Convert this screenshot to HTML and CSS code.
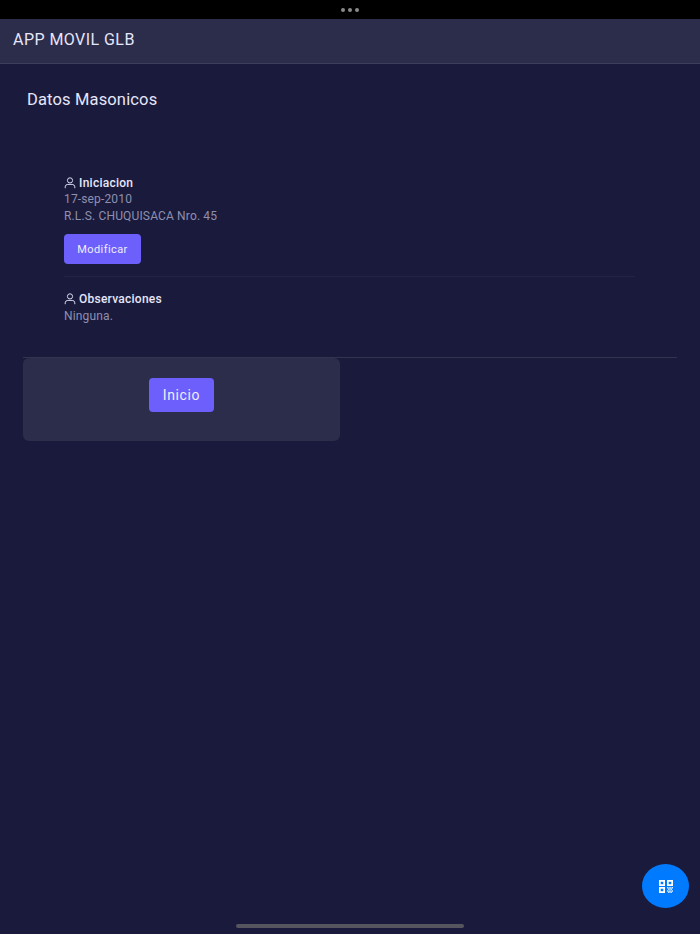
FILE: index.html
```html
<!DOCTYPE html>
<html lang="es">
<head>
<meta charset="utf-8">
<title>APP MOVIL GLB</title>
<link rel="stylesheet" href="styles.css">
</head>
<body>
<div class="status"><span class="dot"></span><span class="dot"></span><span class="dot"></span></div>
<header class="bar">APP MOVIL GLB</header>
<main class="content">
  <h1 class="title">Datos Masonicos</h1>
  <section class="list">
    <div class="item">
      <div class="label"><svg class="user" viewBox="0 0 12 12" width="12" height="12"><circle cx="6" cy="3.400" r="2.600"/><path d="M1.200 11.200v-1.400A2.600 2.600 0 0 1 3.800 7.400h4.400a2.600 2.600 0 0 1 2.600 2.400v1.400"/></svg>Iniciacion</div>
      <div class="value">17-sep-2010</div>
      <div class="value">R.L.S. CHUQUISACA Nro. 45</div>
      <button class="btn small">Modificar</button>
    </div>
    <div class="item last">
      <div class="label"><svg class="user" viewBox="0 0 12 12" width="12" height="12"><circle cx="6" cy="3.400" r="2.600"/><path d="M1.200 11.200v-1.400A2.600 2.600 0 0 1 3.800 7.400h4.400a2.600 2.600 0 0 1 2.600 2.400v1.400"/></svg>Observaciones</div>
      <div class="value">Ninguna.</div>
    </div>
  </section>
  <section class="panel"><button class="btn large">Inicio</button></section>
</main>
<button class="fab" aria-label="QR">
  <svg viewBox="0 0 14 13" width="14" height="13"><path fill-rule="evenodd" d="M0 0h6v6H0zM1.700 1.700v2.600h2.600V1.700zM8 0h6v6H8zM9.700 1.700v2.600h2.600V1.700zM0 7h6v6H0zM1.700 8.700v2.600h2.600V8.700z"/><path class="qr-dots" d="M8 7h1.500v1.500H8zM10.250 7h1.500v1.500h-1.500zM12.500 7H14v1.500h-1.500zM9.100 8.600h1.500v1.500H9.100zM11.400 8.600h1.500v1.500h-1.500zM8 10.200h1.500v1.500H8zM10.250 10.200h1.500v1.500h-1.500zM12.500 10.200H14v1.500h-1.500zM9.100 11.600h1.500V13H9.100zM11.400 11.600h1.500V13h-1.500z"/></svg>
</button>
<div class="home"></div>
</body>
</html>
```
FILE: styles.css
```css
* { box-sizing: border-box; }
html, body { height: 100%; }
body {
  margin: 0;
  height: 934px;
  overflow: hidden;
  background: #1a1b3c;
  font-family: "Roboto", "Noto Sans", sans-serif;
  color: #e6e6fa;
}
.status {
  height: 19px;
  background: #000;
  display: flex;
  justify-content: center;
  align-items: center;
  gap: 3px;
}
.dot { width: 4px; height: 4px; border-radius: 50%; background: #8a8a8a; }
.bar {
  height: 45px;
  background: #2c2c4b;
  border-bottom: 1px solid #3d3d5c;
  padding: 0 13px 4px;
  display: flex;
  align-items: center;
  font-size: 16px;
  font-weight: 400;
  letter-spacing: 0.45px;
}
.content { padding: 0 23px; }
.title {
  margin: 0;
  padding: 26px 4px 0;
  height: 94px;
  font-size: 16.500px;
  font-weight: 400;
  line-height: 20px;
  letter-spacing: 0.15px;
}
.list { padding: 16px 42px 0 41px; border-bottom: 1px solid #33334f; }
.item { padding-bottom: 12px; border-bottom: 1px solid #232344; margin-bottom: 13px; }
.item.last { border-bottom: 0; padding-bottom: 32px; margin-bottom: 0; }
.label {
  display: flex;
  align-items: center;
  gap: 3px;
  height: 17px;
  font-size: 12px;
  font-weight: 500;
  letter-spacing: 0.25px;
}
.user { fill: none; stroke: #d8d8f0; stroke-width: 1; flex: none; }
.value {
  height: 16.500px;
  line-height: 16.500px;
  font-size: 12px;
  color: #8f8fb0;
  letter-spacing: 0.15px;
}
.last .value { margin-top: 1px; }
.btn {
  display: block;
  border: 0;
  background: #6c5ffc;
  color: #eeeeff;
  font-family: inherit;
  border-radius: 4px;
  padding: 0;
}
.small { width: 77px; height: 30px; margin-top: 10px; font-size: 11px; letter-spacing: 0.4px; }
.panel {
  width: 317px;
  height: 83px;
  padding-top: 20px;
  background: #2c2c4b;
  border-radius: 6px;
}
.large { width: 65px; height: 34px; margin: 0 auto; font-size: 14px; letter-spacing: 0.6px; }
.fab {
  position: fixed;
  left: 642px;
  top: 864px;
  width: 47px;
  height: 44px;
  border: 0;
  border-radius: 50%;
  background: #007bff;
  display: flex;
  align-items: center;
  justify-content: center;
  padding: 0;
}
.fab svg { fill: #fff; }
.qr-dots { opacity: .85; }
.home {
  position: fixed;
  left: 236px;
  top: 924px;
  width: 228px;
  height: 4px;
  border-radius: 2px;
  background: #55555f;
}
```
